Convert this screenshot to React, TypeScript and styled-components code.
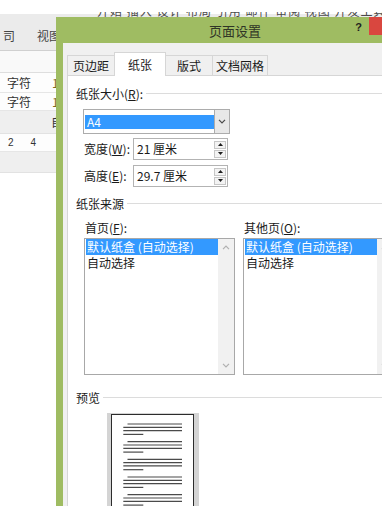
import React from "react";
import styled, { createGlobalStyle } from "styled-components";

const GlobalStyle = createGlobalStyle`
  html, body {
    margin: 0;
    padding: 0;
    background: #fff;
    overflow: hidden;
  }
  body {
    font-family: "Noto Sans CJK SC", "Liberation Sans", sans-serif;
  }
  * {
    box-sizing: border-box;
  }
`;

const Screen = styled.div`
  position: relative;
  width: 382px;
  height: 506px;
  overflow: hidden;
  background: #fff;
  font-size: 12px;
  color: #1a1a1a;
`;

/* ---------- Word window behind the dialog ---------- */

const Backdrop = styled.div`
  display: flex;
  flex-direction: column;
  height: 100%;
`;

const TopGap = styled.div`
  height: 12px;
`;

const RibbonClip = styled.div`
  height: 5px;
  overflow: hidden;
  display: flex;
  align-items: flex-end;
  padding-left: 97px;
  background: linear-gradient(#fff 0 2px, #ebebeb 2px);
  color: #4a4a4a;
  font-size: 12px;
  line-height: 12px;
  white-space: nowrap;
  letter-spacing: 1px;
`;

const Ribbon = styled.div`
  height: 34px;
  display: flex;
  align-items: center;
  gap: 22px;
  padding: 4px 0 0 3px;
  background: #ebebeb;
  border-bottom: 1px solid #d0d0d0;
  color: #444;
  line-height: 16px;
`;

const SheetGap = styled.div`
  height: 22px;
  background: #f9f9f9;
  border-bottom: 1px solid #dedede;
`;

const SheetRow = styled.div<{ $h: number; $gray?: boolean; $pad?: number }>`
  height: ${(p) => p.$h}px;
  display: flex;
  align-items: center;
  padding-left: ${(p) => p.$pad ?? 7}px;
  background: ${(p) => (p.$gray ? "#efefef" : "#fdfdfd")};
  border-bottom: 1px solid ${(p) => (p.$gray ? "#e2e2e2" : "#e6e6e6")};
  color: #333;
  line-height: 16px;
`;

const CellMark = styled.span<{ $gap: number }>`
  margin-left: ${(p) => p.$gap}px;
  color: #7d6b1e;
`;

const Digits = styled.span`
  font-family: "Liberation Sans", sans-serif;
  font-size: 10px;
  color: #333;
  display: flex;
  gap: 17px;
`;

/* ---------- Page setup dialog ---------- */

const Dialog = styled.div`
  position: absolute;
  left: 56px;
  top: 17px;
  width: 360px;
  height: 520px;
  background: #9fbc62;
  display: flex;
  flex-direction: column;
`;

const TitleBar = styled.div`
  height: 26px;
  display: flex;
  align-items: flex-start;
`;

const Title = styled.div`
  margin: 4px 0 0 153px;
  font-size: 13px;
  line-height: 20px;
  color: #2f3526;
`;

const Help = styled.div`
  margin: 3px 7px 0 auto;
  font-family: "Liberation Sans", sans-serif;
  font-weight: bold;
  font-size: 11px;
  line-height: 14px;
  color: #1e1e1e;
`;

const CloseButton = styled.div`
  width: 47px;
  height: 18px;
  background: #d9473f;
`;

const Body = styled.div`
  flex: 1;
  margin-left: 7px;
  padding-left: 4px;
  background: #f0f0f0;
  display: flex;
  flex-direction: column;
`;

const TabRow = styled.div`
  height: 32px;
  display: flex;
  align-items: flex-end;
`;

const Tab = styled.div<{ $w: number; $active?: boolean }>`
  position: relative;
  z-index: ${(p) => (p.$active ? 1 : 0)};
  width: ${(p) => p.$w}px;
  height: ${(p) => (p.$active ? 24 : 20)}px;
  margin-bottom: ${(p) => (p.$active ? -1 : 0)}px;
  margin-left: -1px;
  border: 1px solid #d6d6d6;
  border-bottom: ${(p) => (p.$active ? "none" : "0")};
  background: ${(p) => (p.$active ? "#fff" : "#f0f0f0")};
  display: flex;
  align-items: center;
  justify-content: center;
  line-height: 16px;

  &:first-child {
    margin-left: 0;
  }
`;

const Panel = styled.div`
  flex: 1;
  background: #fff;
  border: 1px solid #d6d6d6;
  display: flex;
  flex-direction: column;
`;

const GroupHeader = styled.div<{ $mt: number }>`
  margin-top: ${(p) => p.$mt}px;
  padding-left: 8px;
  display: flex;
  align-items: center;
  gap: 3px;
  line-height: 16px;

  &::after {
    content: "";
    flex: 1;
    height: 1px;
    margin-top: -1px;
    background: #dcdcdc;
  }
`;

const Key = styled.span`
  text-decoration: underline;
  text-underline-offset: 1px;
`;

const Combo = styled.div`
  margin: 7px 0 0 15px;
  width: 147px;
  height: 25px;
  display: flex;
  border: 1px solid #acacac;
  background: #fff;
`;

const ComboField = styled.div`
  flex: 1;
  padding: 5px 0 4px 1px;
`;

const Selection = styled.div`
  height: 14px;
  padding-left: 2px;
  background: #3399ff;
  color: #fff;
  line-height: 14px;
`;

const ComboArrow = styled.div`
  width: 15px;
  border-left: 1px solid #acacac;
  background: #e8e8e8;
  display: flex;
  align-items: center;
  justify-content: center;
`;

const FieldRow = styled.div<{ $mt: number }>`
  margin-top: ${(p) => p.$mt}px;
  padding-left: 16px;
  display: flex;
  align-items: center;
`;

const FieldLabel = styled.div`
  width: 49px;
  line-height: 16px;
`;

const SpinBox = styled.div`
  width: 95px;
  height: 22px;
  border: 1px solid #b3b3b3;
  display: flex;
  align-items: center;
`;

const SpinValue = styled.div`
  flex: 1;
  padding-left: 3px;
  line-height: 16px;
`;

const SpinButtons = styled.div`
  width: 12px;
  height: 17px;
  margin-right: 1px;
  display: flex;
  flex-direction: column;
  gap: 1px;
`;

const SpinButton = styled.div`
  flex: 1;
  border: 1px solid #c6c6c6;
  background: #f3f3f3;
  display: flex;
  align-items: center;
  justify-content: center;
`;

const SourceGrid = styled.div`
  margin-top: 8px;
  padding-left: 16px;
  display: flex;
  gap: 8px;
`;

const SourceCol = styled.div`
  width: 151px;
  flex: none;
  display: flex;
  flex-direction: column;
`;

const SourceLabel = styled.div`
  padding-left: 1px;
  margin-bottom: 2px;
  line-height: 16px;
`;

const ListBox = styled.div`
  height: 137px;
  border: 1px solid #a8a8a8;
  background: #fff;
  display: flex;
`;

const ListItems = styled.div`
  flex: 1;
  padding: 0 0 0 1px;
`;

const ListItem = styled.div<{ $selected?: boolean }>`
  line-height: 16px;
  padding-left: 1px;
  white-space: nowrap;
  background: ${(p) => (p.$selected ? "#3399ff" : "transparent")};
  color: ${(p) => (p.$selected ? "#fff" : "#1a1a1a")};
`;

const ScrollBar = styled.div`
  width: 16px;
  background: #f1f1f1;
  display: flex;
  flex-direction: column;
  align-items: center;
  justify-content: space-between;
  padding: 6px 0 6px;
`;

const PreviewFrame = styled.div`
  margin: 7px 0 0 39px;
  width: 92px;
  height: 110px;
  padding: 1px 4px 0 4px;
  background: #d4d4d4;
`;

const PreviewPage = styled.div`
  width: 83px;
  height: 120px;
  border: 1px solid #2c2c2c;
  background: #fff;
`;

const Chevron = ({ up, color }: { up?: boolean; color: string }) => (
  <svg width="8" height="5" viewBox="0 0 8 5">
    <path
      d={up ? "M1 4.2 L4 1.2 L7 4.2" : "M1 0.8 L4 3.8 L7 0.8"}
      fill="none"
      stroke={color}
      strokeWidth="1.2"
    />
  </svg>
);

const Triangle = ({ up }: { up?: boolean }) => (
  <svg width="5" height="3" viewBox="0 0 5 3">
    <path d={up ? "M0 3 L2.5 0 L5 3Z" : "M0 0 L2.5 3 L5 0Z"} fill="#1e1e1e" />
  </svg>
);

const PageLines = () => {
  const groups = [9, 26.7, 44.3, 62, 79.7, 97.3];
  return (
    <svg width="81" height="118" viewBox="0 0 81 118">
      {groups.map((y) => (
        <g key={y} stroke="#4a4a4a" strokeWidth="1.2">
          <line x1="15.5" y1={y} x2="70" y2={y} />
          <line x1="11.3" y1={y + 3.3} x2="70" y2={y + 3.3} />
          <line x1="11.3" y1={y + 6.6} x2="70" y2={y + 6.6} />
          <line x1="11.3" y1={y + 10.4} x2="31.3" y2={y + 10.4} />
        </g>
      ))}
    </svg>
  );
};

const trays = ["默认纸盒 (自动选择)", "自动选择"];

export default function App() {
  return (
    <>
      <GlobalStyle />
      <Screen>
        <Backdrop>
          <TopGap />
          <RibbonClip>开始 插入 设计 布局 引用 邮件 审阅 视图 开发工具 加载项</RibbonClip>
          <Ribbon>
            <span>司</span>
            <span>视图</span>
          </Ribbon>
          <SheetGap />
          <SheetRow $h={20}>
            字符<CellMark $gap={21}>1</CellMark>
          </SheetRow>
          <SheetRow $h={18}>
            字符<CellMark $gap={21}>1</CellMark>
          </SheetRow>
          <SheetRow $h={23} $gray $pad={51}>
            自
          </SheetRow>
          <SheetRow $h={18} $pad={8}>
            <Digits>
              <span>2</span>
              <span>4</span>
            </Digits>
          </SheetRow>
          <SheetRow $h={21} $gray />
        </Backdrop>

        <Dialog>
          <TitleBar>
            <Title>页面设置</Title>
            <Help>?</Help>
            <CloseButton />
          </TitleBar>
          <Body>
            <TabRow>
              <Tab $w={48}>页边距</Tab>
              <Tab $w={52} $active>
                纸张
              </Tab>
              <Tab $w={48}>版式</Tab>
              <Tab $w={56}>文档网格</Tab>
            </TabRow>
            <Panel>
              <GroupHeader $mt={10}>
                <span>
                  纸张大小(<Key>R</Key>):
                </span>
              </GroupHeader>
              <Combo>
                <ComboField>
                  <Selection>A4</Selection>
                </ComboField>
                <ComboArrow>
                  <Chevron color="#4a4a4a" />
                </ComboArrow>
              </Combo>
              <FieldRow $mt={4}>
                <FieldLabel>
                  宽度(<Key>W</Key>):
                </FieldLabel>
                <SpinBox>
                  <SpinValue>21 厘米</SpinValue>
                  <SpinButtons>
                    <SpinButton>
                      <Triangle up />
                    </SpinButton>
                    <SpinButton>
                      <Triangle />
                    </SpinButton>
                  </SpinButtons>
                </SpinBox>
              </FieldRow>
              <FieldRow $mt={5}>
                <FieldLabel>
                  高度(<Key>E</Key>):
                </FieldLabel>
                <SpinBox>
                  <SpinValue>29.7 厘米</SpinValue>
                  <SpinButtons>
                    <SpinButton>
                      <Triangle up />
                    </SpinButton>
                    <SpinButton>
                      <Triangle />
                    </SpinButton>
                  </SpinButtons>
                </SpinBox>
              </FieldRow>

              <GroupHeader $mt={9}>
                <span>纸张来源</span>
              </GroupHeader>
              <SourceGrid>
                <SourceCol>
                  <SourceLabel>
                    首页(<Key>F</Key>):
                  </SourceLabel>
                  <ListBox>
                    <ListItems>
                      {trays.map((t, i) => (
                        <ListItem key={t} $selected={i === 0}>
                          {t}
                        </ListItem>
                      ))}
                    </ListItems>
                    <ScrollBar>
                      <Chevron up color="#b0b0b0" />
                      <Chevron color="#b0b0b0" />
                    </ScrollBar>
                  </ListBox>
                </SourceCol>
                <SourceCol>
                  <SourceLabel>
                    其他页(<Key>O</Key>):
                  </SourceLabel>
                  <ListBox>
                    <ListItems>
                      {trays.map((t, i) => (
                        <ListItem key={t} $selected={i === 0}>
                          {t}
                        </ListItem>
                      ))}
                    </ListItems>
                    <ScrollBar>
                      <Chevron up color="#b0b0b0" />
                      <Chevron color="#b0b0b0" />
                    </ScrollBar>
                  </ListBox>
                </SourceCol>
              </SourceGrid>

              <GroupHeader $mt={15}>
                <span>预览</span>
              </GroupHeader>
              <PreviewFrame>
                <PreviewPage>
                  <PageLines />
                </PreviewPage>
              </PreviewFrame>
            </Panel>
          </Body>
        </Dialog>
      </Screen>
    </>
  );
}
